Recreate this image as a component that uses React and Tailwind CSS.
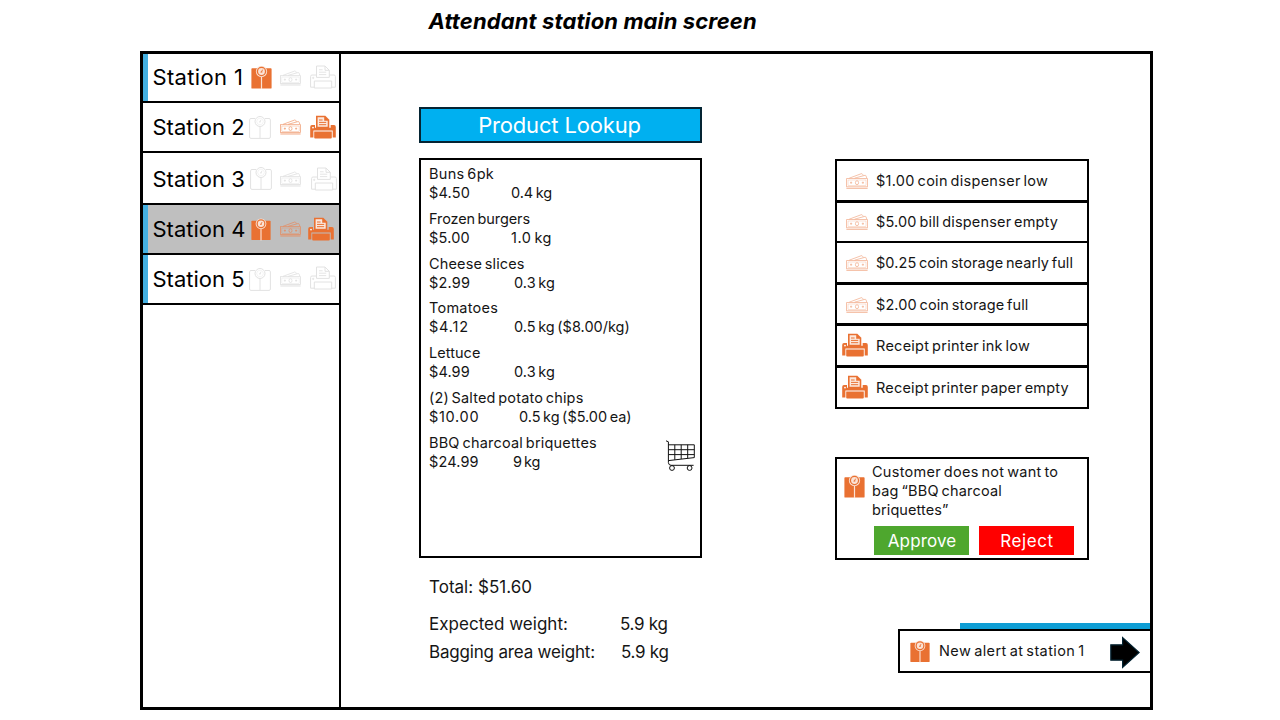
import React from 'react';

function ScaleIcon({ filled, className }) {
  if (filled) {
    return (
      <svg viewBox="0 0 21 23" className={className} fill="none">
        <path d="M1.2 2.3H19.8Q20.6 2.3 20.6 3.1V21.7Q20.6 22.6 19.8 22.6H1.2Q.4 22.6.4 21.7V3.1Q.4 2.3 1.2 2.3Z" fill="#e97132" />
        <circle cx="10.5" cy="5.5" r="5.6" fill="#fbe3d6" />
        <circle cx="10.5" cy="5.5" r="4.7" fill="#e97132" />
        <circle cx="10.5" cy="5.5" r="3.4" fill="#fbe3d6" />
        <path d="M10.2 6.4 11.6 3.7M9.6 6h1.8" stroke="#e97132" strokeWidth=".9" />
        <path d="M10.5 11V23" stroke="#fbe3d6" strokeWidth="1.2" />
      </svg>
    );
  }
  return (
    <svg viewBox="0 0 22 23" className={className} fill="none" stroke="#e2e2e2" strokeWidth="1">
      <path d="M6 2.5H2Q.6 2.5.6 3.9V21Q.6 22.4 2 22.4H20Q21.4 22.4 21.4 21V3.9Q21.4 2.5 20 2.5H16" />
      <circle cx="11" cy="5.5" r="5" />
      <circle cx="11" cy="5.5" r="3.3" strokeWidth=".4" />
      <path d="M10.8 6.2 12 3.7M10.2 5.8h1.6" strokeWidth=".8" />
      <path d="M11 10.5V22.4" />
    </svg>
  );
}

function CashIcon({ color, className }) {
  return (
    <svg viewBox="0 0 22 16" className={className} fill="none" stroke={color} strokeWidth=".8">
      <path d="M3.2 5.2 15.3.7Q16.2.5 16.6 1.3L17.2 2.6" />
      <path d="M8.5 5.2 19 2.3Q19.8 2.2 20 2.9L20.8 5.2" />
      <rect x=".6" y="5.6" width="20.8" height="8.2" />
      <rect x="2" y="7" width="18" height="5.5" strokeWidth=".4" />
      <ellipse cx="11" cy="9.7" rx="1.6" ry="2" />
      <path d="M4 9.7h2.2M5.1 8.6v2.2M15.8 9.7H18M16.9 8.6v2.2" />
      <path d="M.4 15.3h21.2" strokeWidth="1" />
    </svg>
  );
}

function PrinterIcon({ filled, className }) {
  if (filled) {
    return (
      <svg viewBox="0 0 26 24" className={className} fill="none">
        <path d="M6 .7H15.3L19.3 4.7V13H6Z" fill="#e97132" />
        <path d="M7.6 11.7V2.2H14.2V5.7H17.7V11.7Z" fill="#fbe9df" />
        <path d="M9 5h3.6M9 7.4h7.2M9 9.7h7.2" stroke="#e97132" strokeWidth="1" />
        <path d="M15 2.7 17.2 4.9H15Z" fill="#e97132" />
        <path d="M2 10H5V12.8H20.7V10H24Q25.8 10 25.8 12V22.6H22.7V15.6H3.4V22.6H.2V12Q.2 10 2 10Z" fill="#e97132" />
        <path d="M4.2 16.5H21.8V22.4Q21.8 23.4 20.8 23.4H5.2Q4.2 23.4 4.2 22.4Z" fill="#e97132" />
        <circle cx="3" cy="12.6" r=".9" fill="#fff" />
      </svg>
    );
  }
  return (
    <svg viewBox="0 0 26 24" className={className} fill="none" stroke="#e2e2e2" strokeWidth="1">
      <path d="M6.5 12.4V1H15L19.3 5.3V12.4ZM15 1V5.3H19.3" />
      <path d="M9 4.8h3.6M9 7.2h7.2M9 9.6h7.2" strokeWidth=".9" />
      <path d="M6.5 10H2Q.6 10 .6 11.5V22.2H4.3M19.3 10H24Q25.4 10 25.4 11.5V22.2H21.7" />
      <path d="M4.3 16H21.7V23H4.3Z" />
      <circle cx="3.2" cy="12.9" r=".6" />
    </svg>
  );
}

function CartIcon({ className }) {
  return (
    <svg viewBox="0 0 29 31" className={className} fill="none" stroke="#111" strokeWidth="1">
      <path d="M0 .8 2.4 1.8V22.6Q2.6 25.2 5 25.3H27.6" />
      <path d="M2.5 4.8H28.3V17.6L2.5 20.6M2.5 9.7H28.3M2.5 14.6H28.3" />
      <path d="M8.8 4.8V19.8M15.2 4.8V19M21.7 4.8V18.3" />
      <circle cx="6" cy="28" r="2.4" />
      <circle cx="23.6" cy="28" r="2.4" />
    </svg>
  );
}

const stations = [
  { name: 'Station 1', track: 'pb-px tracking-[0.35px]', row: 'h-[49px] bg-white', active: true, scale: true, printer: false, cashColor: '#dedede', scaleBox: 'ml-[108px] w-[21px]', cashGap: 'ml-[8px]', printGap: 'mb-[2px] ml-[9px]' },
  { name: 'Station 2', track: '', row: 'h-[50px] bg-white', active: false, scale: false, printer: true, cashColor: '#f0a078', scaleBox: 'ml-[106px] w-[22px]', cashGap: 'ml-[9px]', printGap: 'ml-[9px]' },
  { name: 'Station 3', track: '', row: 'h-[52px] bg-white pt-px', active: false, scale: false, printer: false, cashColor: '#dedede', scaleBox: 'ml-[107px] w-[22px]', cashGap: 'ml-[8px]', printGap: 'ml-[10px]' },
  { name: 'Station 4', track: '', row: 'h-[50px] bg-[#bfbfbf]', active: true, scale: true, printer: true, cashColor: '#e58d62', scaleBox: 'ml-[108px] w-[20px]', cashGap: 'ml-[9px]', printGap: 'ml-[7px]' },
  { name: 'Station 5', track: '', row: 'h-[50px] bg-white', active: true, scale: false, printer: false, cashColor: '#dedede', scaleBox: 'ml-[106px] w-[22px]', cashGap: 'ml-[9px]', printGap: 'mb-[2px] ml-[9px]' },
];

function StationRow({ s }) {
  return (
    <div className={`relative flex shrink-0 items-center border-b-2 border-black ${s.row}`}>
      {s.active && <div className="absolute inset-y-0 left-0 w-[5px] bg-[#45b0e1]" />}
      <span className={`ml-[9.5px] w-0 whitespace-nowrap text-[22px] leading-7 ${s.track}`}>{s.name}</span>
      <div className="-ml-[9.5px] flex items-center">
        <ScaleIcon filled={s.scale} className={`h-[23px] shrink-0 ${s.scaleBox}`} />
        <CashIcon color={s.cashColor} className={`h-[16px] w-[21px] shrink-0 ${s.cashGap}`} />
        <PrinterIcon filled={s.printer} className={`h-[24px] w-[26px] shrink-0 ${s.printGap}`} />
      </div>
    </div>
  );
}

const products = [
  { name: 'Buns 6pk', nt: 'tracking-[0.3px]', price: '$4.50', pt: 'tracking-[0.2px]', col: 'w-[82px]', weight: '0.4 kg', wt: 'tracking-[-0.05px]' },
  { name: 'Frozen burgers', nt: 'tracking-[-0.1px]', price: '$5.00', pt: 'tracking-[0.2px]', col: 'w-[82px]', weight: '1.0 kg', wt: 'tracking-[0.5px]' },
  { name: 'Cheese slices', nt: 'tracking-[0.14px]', price: '$2.99', pt: 'tracking-[0.2px]', col: 'w-[85px]', weight: '0.3 kg', wt: 'tracking-[0.05px]' },
  { name: 'Tomatoes', nt: 'tracking-[0.25px]', price: '$4.12', pt: 'tracking-[0.8px]', col: 'w-[85px]', weight: '0.5 kg ($8.00/kg)', wt: 'tracking-[0.01px]' },
  { name: 'Lettuce', nt: 'tracking-[0.05px]', price: '$4.99', pt: 'tracking-[0.1px]', col: 'w-[85px]', weight: '0.3 kg', wt: 'tracking-[0.05px]' },
  { name: '(2) Salted potato chips', nt: 'tracking-[0.15px]', price: '$10.00', pt: 'tracking-[0.7px]', col: 'w-[90px]', weight: '0.5 kg ($5.00 ea)', wt: 'tracking-[-0.02px]' },
  { name: 'BBQ charcoal briquettes', nt: 'tracking-[0.2px]', price: '$24.99', pt: 'tracking-[0.15px]', col: 'w-[84px]', weight: '9 kg', wt: 'tracking-[-0.25px]' },
];

const alerts = [
  { text: '$1.00 coin dispenser low', printer: false, cls: 'h-[42px] border-b-3 tracking-[0.28px]' },
  { text: '$5.00 bill dispenser empty', printer: false, cls: 'h-[40px] border-b-2 pb-px tracking-[0.17px]' },
  { text: '$0.25 coin storage nearly full', printer: false, cls: 'h-[42px] border-b-3 tracking-[0.07px]' },
  { text: '$2.00 coin storage full', printer: false, cls: 'h-[41px] border-b-3 pt-px tracking-[0.11px]' },
  { text: 'Receipt printer ink low', printer: true, cls: 'h-[42px] border-b-3 tracking-[0.26px]' },
  { text: 'Receipt printer paper empty', printer: true, cls: 'h-[41px] border-b-2 tracking-[0.2px]' },
];

function AlertRow({ a }) {
  return (
    <div className={`flex items-center border-black ${a.cls}`}>
      {a.printer ? (
        <PrinterIcon filled className="mb-[2px] ml-[5px] mr-[8px] h-[24px] w-[26px] shrink-0" />
      ) : (
        <CashIcon color="#f3b496" className="ml-[9px] mr-[8px] h-[16px] w-[22px] shrink-0" />
      )}
      <span>{a.text}</span>
    </div>
  );
}

export default function App() {
  return (
    <div className="h-[720px] w-[1280px] overflow-hidden bg-white font-['Inter','Liberation_Sans',sans-serif] text-black">
      <h1 className="h-[51px] pl-[428.5px] pt-[7px] text-[22px] font-bold italic leading-7 tracking-[0.11px] whitespace-nowrap">
        Attendant station main screen
      </h1>
      <div className="ml-[140px] flex h-[659px] w-[1013px] border-3 border-black">
        <nav className="flex w-[198px] shrink-0 flex-col border-r-2 border-black">
          {stations.map((s) => (
            <StationRow key={s.name} s={s} />
          ))}
        </nav>

        <section className="ml-[78px] flex w-[283px] shrink-0 flex-col whitespace-nowrap pt-[53px] text-[14.5px] leading-[19px] text-[#151515]">
          <button className="h-[36px] border-2 border-[#042433] bg-[#00b0f0] pr-[2px] text-[22px] leading-8 tracking-[-0.16px] text-white">
            Product Lookup
          </button>
          <div className="relative mt-[15px] flex h-[400px] flex-col gap-[6.83px] border-2 border-black pl-[8px] pt-[4px] [word-spacing:-1.5px]">
            {products.map((p) => (
              <div key={p.name}>
                <div className={p.nt}>{p.name}</div>
                <div className="flex">
                  <span className={`${p.col} ${p.pt}`}>{p.price}</span>
                  <span className={p.wt}>{p.weight}</span>
                </div>
              </div>
            ))}
            <CartIcon className="absolute left-[245px] top-[280px] h-[31px] w-[29px]" />
          </div>
          <div className="pl-[10px] text-[17px] leading-7">
            <div className="mt-[14.5px] tracking-[0.02px]">Total: $51.60</div>
            <div className="mt-[9px] flex">
              <span className="w-[191px] tracking-[0.02px]">Expected weight:</span>
              <span className="tracking-[-0.3px]">5.9 kg</span>
            </div>
            <div className="flex">
              <span className="w-[192px] tracking-[-0.18px]">Bagging area weight:</span>
              <span className="tracking-[-0.3px]">5.9 kg</span>
            </div>
          </div>
        </section>

        <section className="flex min-w-0 flex-1 flex-col whitespace-nowrap pt-[105px] text-[14.5px] leading-[19px] text-[#151515] [word-spacing:-1.5px]">
          <div className="ml-[133px] w-[254px] border-x-2 border-t-2 border-black">
            {alerts.map((a) => (
              <AlertRow key={a.text} a={a} />
            ))}
          </div>

          <div className="ml-[133px] mt-[48px] h-[103px] w-[254px] border-2 border-black pl-[7px] pt-[3px]">
            <div className="flex">
              <ScaleIcon filled className="mt-[13px] h-[23px] w-[21px] shrink-0" />
              <div className="ml-[7px]">
                <div className="tracking-[0.28px]">Customer does not want to</div>
                <div className="tracking-[0.2px]">bag “BBQ charcoal</div>
                <div className="tracking-[0.1px]">briquettes”</div>
              </div>
            </div>
            <div className="ml-[30px] mt-[7px] flex gap-[10px] text-[17px] leading-[29px] text-white">
              <button className="h-[29px] w-[95px] bg-[#4ea72e] pl-px pt-px tracking-[0.12px]">Approve</button>
              <button className="h-[29px] w-[95px] bg-[#ff0000] pl-px pt-px tracking-[0.6px]">Reject</button>
            </div>
          </div>

          <div className="mt-[63px] h-[6px] w-[190px] self-end bg-[#0f9ed5]" />
          <div className="flex h-[44px] w-[252px] items-center self-end border-y-2 border-l-2 border-black">
            <ScaleIcon filled className="ml-[10px] h-[23px] w-[20px] shrink-0" />
            <span className="ml-[9px] w-[171px] pb-[2px] tracking-[0.4px]">New alert at station 1</span>
            <svg viewBox="0 0 30 33" className="mt-[2px] h-[33px] w-[30px] shrink-0">
              <path d="M.8 8.8H12.6V1.5L29.2 16.5 12.6 31.5V24.2H.8Z" fill="#000" stroke="#042433" strokeWidth="1.2" />
            </svg>
          </div>
        </section>
      </div>
    </div>
  );
}
